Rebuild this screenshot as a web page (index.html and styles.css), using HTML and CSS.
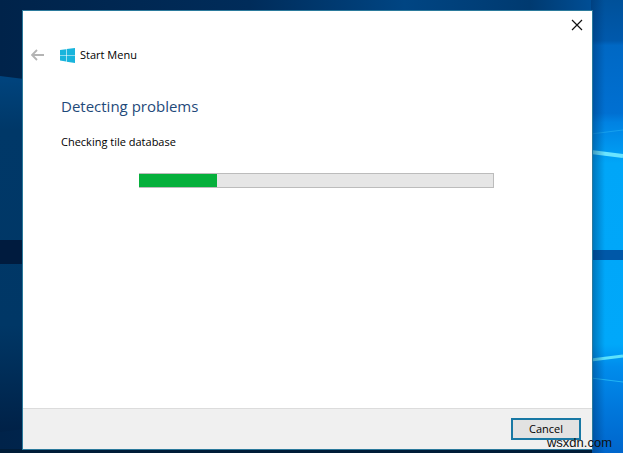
FILE: index.html
```html
<!DOCTYPE html>
<html lang="en">
<head>
    <meta charset="UTF-8">
    <meta name="viewport" content="width=device-width, initial-scale=1.0">
    <title>Start Menu</title>
    <link rel="stylesheet" href="styles.css">
</head>
<body>
    <svg class="wallpaper" viewBox="0 0 623 453" preserveAspectRatio="none" aria-hidden="true">
        <defs>
            <linearGradient id="top" x1="0" x2="1" y1="0" y2="0">
                <stop offset="0" stop-color="#00234a"/>
                <stop offset="0.4" stop-color="#002c5a"/>
                <stop offset="0.65" stop-color="#004583"/>
                <stop offset="0.85" stop-color="#003a70"/>
                <stop offset="1" stop-color="#0058a8"/>
            </linearGradient>
            <linearGradient id="left" x1="0" x2="0" y1="0" y2="1">
                <stop offset="0" stop-color="#00447e"/>
                <stop offset="0.15" stop-color="#003868"/>
                <stop offset="0.7" stop-color="#003766"/>
                <stop offset="1" stop-color="#002147"/>
            </linearGradient>
            <linearGradient id="right" x1="0" x2="0" y1="0" y2="1">
                <stop offset="0" stop-color="#00519a"/>
                <stop offset="0.09" stop-color="#0059ac"/>
                <stop offset="0.1" stop-color="#0068c4"/>
                <stop offset="0.25" stop-color="#0070d2"/>
                <stop offset="0.27" stop-color="#0082e2"/>
                <stop offset="0.33" stop-color="#0098f0"/>
                <stop offset="0.36" stop-color="#00a6f8"/>
                <stop offset="0.76" stop-color="#00a8fa"/>
                <stop offset="0.81" stop-color="#008cec"/>
                <stop offset="0.9" stop-color="#0078dc"/>
                <stop offset="1" stop-color="#0066cc"/>
            </linearGradient>
            <linearGradient id="shade" x1="0" x2="1" y1="0" y2="0">
                <stop offset="0" stop-color="#002c60" stop-opacity="0.45"/>
                <stop offset="1" stop-color="#002c60" stop-opacity="0"/>
            </linearGradient>
        </defs>
        <rect width="623" height="453" fill="url(#top)"/>
        <path d="M0 76L24 79V429L0 432Z" fill="url(#left)"/>
        <rect y="240" width="24" height="24" fill="#001b3e"/>
        <rect x="591" width="32" height="453" fill="url(#right)"/>
        <path d="M591 134L623 130" stroke="#16a0ee"/>
        <path d="M591 152L623 156" stroke="#6ae4ff" stroke-width="4"/>
        <rect x="591" y="250" width="32" height="10" fill="#0058a8"/>
        <path d="M591 360L623 356" stroke="#5ce2fc" stroke-width="3"/>
        <path d="M591 378L623 382" stroke="#20b4f4"/>
        <rect x="591" width="14" height="453" fill="url(#shade)"/>
        <rect y="449" width="592" height="4" fill="#001c38"/>
    </svg>

    <main class="dialog">
        <button class="close" type="button" aria-label="Close">
            <svg width="12" height="12" viewBox="0 0 12 12" aria-hidden="true">
                <path d="M1 1L11 11M11 1L1 11" stroke="#111" stroke-width="1.2"/>
            </svg>
        </button>

        <header class="title-bar">
            <button class="back" type="button" aria-label="Back" disabled>
                <svg width="14" height="12" viewBox="0 0 14 12" aria-hidden="true">
                    <path d="M13 6H1M6 1L1 6L6 11" fill="none" stroke="#b4b4b4" stroke-width="1.8"/>
                </svg>
            </button>
            <svg class="logo" width="15" height="15" viewBox="0 0 15 15" aria-hidden="true">
                <path d="M0 2L6 1.2V7H0ZM6.6 1L15 0V7H6.6ZM0 7.6H6V13.5L0 12.6ZM6.6 7.6H15V15L6.6 13.8Z" fill="#18b4dc"/>
            </svg>
            <span>Start Menu</span>
        </header>

        <section class="content">
            <h1>Detecting problems</h1>
            <p id="status">Checking tile database</p>
            <div class="progress" role="progressbar" aria-labelledby="status" aria-valuemin="0" aria-valuemax="100" aria-valuenow="22">
                <div class="progress-bar" style="width: 22%"></div>
            </div>
        </section>

        <footer class="actions">
            <button class="cancel" type="button">Cancel</button>
        </footer>
    </main>

    <span class="watermark">wsxdn.com</span>
</body>
</html>
```
FILE: styles.css
```css
* {
    box-sizing: border-box;
}

body {
    display: flex;
    min-height: 100vh;
    margin: 0;
    padding: 10px 30px 3px 22px;
    background-color: #00234a;
    color: #000;
    font-family: "Open Sans", "Noto Sans", sans-serif;
    font-size: 11px;
    line-height: 16px;
    overflow: hidden;
}

button {
    padding: 0;
    border: none;
    background: none;
    color: inherit;
    font: inherit;
}

svg {
    display: block;
}

.wallpaper {
    position: absolute;
    top: 0;
    left: 0;
    width: 100%;
    height: 100%;
}

.dialog {
    position: relative;
    display: flex;
    flex: 1;
    flex-direction: column;
    border: 1px solid #2b7a9c;
    background-color: #fff;
}

.close {
    position: absolute;
    top: 8px;
    right: 9px;
}

.title-bar {
    display: flex;
    align-items: center;
    padding: 36px 8px 0;
}

.logo {
    margin: 0 5px 0 15px;
}

.content {
    flex: 1;
    padding: 31px 38px;
}

h1 {
    margin: 0;
    color: #1f4a7a;
    font-size: 15px;
    font-weight: 400;
    line-height: 24px;
}

.content p {
    margin: 16px 0 23px;
}

.progress {
    height: 15px;
    margin: 0 60px 0 78px;
    border: 1px solid #bcbcbc;
    border-left: none;
    background-color: #e6e6e6;
}

.progress-bar {
    height: 100%;
    background-color: #06b03c;
}

.actions {
    display: flex;
    justify-content: flex-end;
    padding: 9px 11px;
    border-top: 1px solid #dcdcdc;
    background-color: #f0f0f0;
}

.cancel {
    width: 70px;
    height: 22px;
    border: 2px solid #1878a4;
    background-color: #e2e2e2;
}

.watermark {
    position: absolute;
    right: 11px;
    bottom: 2px;
    color: #111;
    font-family: "Liberation Sans", Arial, sans-serif;
    font-size: 13px;
}
```
